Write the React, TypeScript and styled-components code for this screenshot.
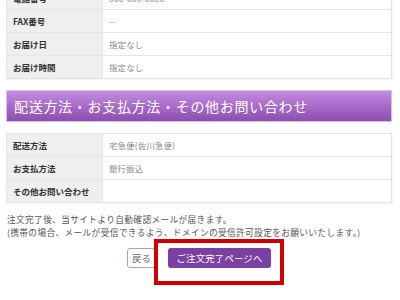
import React from "react";
import styled, { createGlobalStyle } from "styled-components";

const Global = createGlobalStyle`
  html, body { margin: 0; padding: 0; background: #fff; overflow: hidden; }
  body { font-family: "Noto Sans CJK JP", "Noto Sans", sans-serif; }
`;

const Page = styled.div`
  width: 400px;
  height: 300px;
  overflow: hidden;
  padding: 0 8px 0 6px;
  box-sizing: border-box;
`;

const Table = styled.div<{ $top?: number }>`
  margin-top: ${(p) => p.$top ?? 11}px;
  border: 1px solid #e4e4e4;
  box-shadow: 1px 1px 2px rgba(0, 0, 0, 0.06);
  background: #fff;
`;

const Row = styled.div`
  display: grid;
  grid-template-columns: 96px 1fr;
  height: 22px;
  border-top: 1px solid #e6e6e6;
  &:first-child { border-top: none; }
`;

const Label = styled.div`
  background: #efefef;
  display: flex;
  align-items: center;
  padding-left: 6px;
  font-size: 8.5px;
  font-weight: 700;
  color: #333;
  letter-spacing: 0px;
  border-right: 1px solid #e6e6e6;
`;

const Value = styled.div`
  display: flex;
  align-items: center;
  padding-left: 6px;
  font-size: 8.3px;
  color: #888;
  letter-spacing: 0.3px;
`;

const Heading = styled.h2`
  margin: 11px 0 0;
  height: 32px;
  box-sizing: border-box;
  border: 1px solid #dcbde9;
  background: linear-gradient(to bottom, #c18ddf 0%, #a96bcb 50%, #8d4fae 100%);
  color: #fff;
  font-size: 14px;
  font-weight: 400;
  display: flex;
  align-items: center;
  padding-left: 7px;
  letter-spacing: 0.7px;
`;

const Notes = styled.p`
  margin: 10px 0 0 1px;
  font-size: 8.7px;
  line-height: 13px;
  color: #555;
  letter-spacing: 0.35px;
`;

const ButtonRow = styled.div`
  position: relative;
  display: flex;
  justify-content: center;
  gap: 12px;
  margin-top: 9px;
`;

const BackButton = styled.button`
  height: 20px;
  width: 29px;
  padding: 0;
  border: 1px solid #b49ad0;
  border-radius: 3px;
  background: #fff;
  color: #666;
  font-family: inherit;
  font-size: 9.5px;
`;

const NextButton = styled.button`
  height: 20px;
  width: 103px;
  padding: 0;
  border: none;
  border-radius: 3px;
  background: #7b40a3;
  color: #fff;
  font-family: inherit;
  font-size: 9.4px;
  letter-spacing: 0.2px;
`;

const Highlight = styled.div`
  position: absolute;
  left: 148px;
  top: -9px;
  width: 130px;
  height: 46px;
  box-sizing: border-box;
  border: 4px solid #d20000;
  pointer-events: none;
`;

const topRows: [string, string][] = [
  ["電話番号", "000-000-0000"],
  ["FAX番号", "--"],
  ["お届け日", "指定なし"],
  ["お届け時間", "指定なし"],
];

const bottomRows: [string, string][] = [
  ["配送方法", "宅急便(佐川急便)"],
  ["お支払方法", "銀行振込"],
  ["その他お問い合わせ", ""],
];

export default function App() {
  return (
    <Page>
      <Global />
      <Table $top={-14}>
        {topRows.map(([l, v]) => (
          <Row key={l}>
            <Label>{l}</Label>
            <Value>{v}</Value>
          </Row>
        ))}
      </Table>
      <Heading>配送方法・お支払方法・その他お問い合わせ</Heading>
      <Table>
        {bottomRows.map(([l, v]) => (
          <Row key={l}>
            <Label>{l}</Label>
            <Value>{v}</Value>
          </Row>
        ))}
      </Table>
      <Notes>
        注文完了後、当サイトより自動確認メールが届きます。
        <br />
        (携帯の場合、メールが受信できるよう、ドメインの受信許可設定をお願いいたします。)
      </Notes>
      <ButtonRow>
        <BackButton>戻る</BackButton>
        <NextButton>ご注文完了ページへ</NextButton>
        <Highlight />
      </ButtonRow>
    </Page>
  );
}
